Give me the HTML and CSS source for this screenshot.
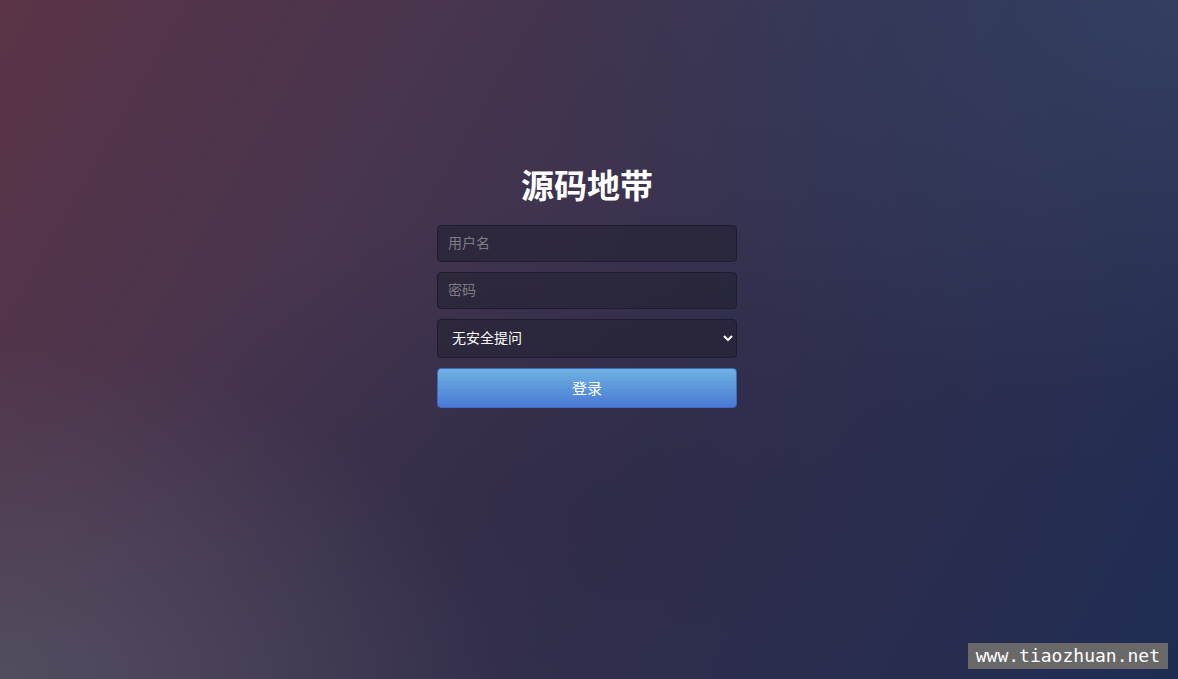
FILE: index.html
```html
<!DOCTYPE html>
<html lang="zh-CN">
<head>
    <meta charset="UTF-8">
    <meta name="viewport" content="width=device-width, initial-scale=1.0">
    <title>源码地带</title>
    <link rel="stylesheet" href="styles.css">
</head>
<body>

    <div class="login">
        <h1>源码地带</h1>
        <form class="login-form">
            <input type="text" class="campo" placeholder="用户名">
            <input type="password" class="campo" placeholder="密码">
            <select class="campo pregunta">
                <option>无安全提问</option>
                <option>母亲的名字</option>
                <option>爷爷的名字</option>
            </select>
            <button type="button" class="entrar">登录</button>
        </form>
    </div>

    <div class="marca">www.tiaozhuan.net</div>

</body>
</html>
```
FILE: styles.css
```css
html, body {
    height: 100%;
}
body {
    margin: 0;
    font-family: "Noto Sans CJK SC", "Liberation Sans", sans-serif;
    color: #fff;
    background:
        radial-gradient(ellipse 60% 70% at 0% 100%, rgba(84, 82, 100, 0.8), rgba(84, 82, 100, 0) 70%),
        radial-gradient(ellipse 55% 60% at 100% 0%, rgba(52, 64, 98, 0.9), rgba(52, 64, 98, 0) 100%),
        radial-gradient(ellipse 45% 45% at 50% 75%, rgba(40, 37, 66, 0.45), rgba(40, 37, 66, 0) 100%),
        linear-gradient(120deg, #5b3447 0%, #47354e 30%, #34314f 58%, #1f2c52 100%);
    background-color: #32314f;
    overflow: hidden;
}
.login {
    width: 300px;
    padding: 161px 4px 0 0;
    margin: 0 auto;
}
h1 {
    margin: 0 0 18px;
    text-align: center;
    font-size: 33px;
    font-weight: bold;
    line-height: 46px;
}
.login-form {
    display: flex;
    flex-direction: column;
    gap: 10px;
}
.campo {
    box-sizing: border-box;
    width: 100%;
    height: 37px;
    padding: 0 10px 3px;
    font-family: inherit;
    font-size: 14px;
    color: #fff;
    background-color: rgba(35, 33, 50, 0.6);
    border: 1px solid #1d1b2c;
    border-radius: 4px;
    outline: none;
}
.campo::placeholder {
    color: #7d7b86;
}
.pregunta {
    height: 39px;
    padding-left: 10px;
    color-scheme: dark;
}
.pregunta option {
    background-color: #2d2b3f;
}
.entrar {
    height: 40px;
    padding-bottom: 3px;
    font-family: inherit;
    font-size: 15px;
    color: #fff;
    background: linear-gradient(#6fb2e0, #4a7ad6);
    border: 1px solid #3f68c2;
    border-radius: 4px;
    cursor: pointer;
}
.entrar:hover {
    background: linear-gradient(#78baea, #5284e0);
}
.marca {
    position: absolute;
    right: 10px;
    bottom: 10px;
    padding: 0 8px;
    height: 26px;
    line-height: 26px;
    font-family: "DejaVu Sans Mono", monospace;
    font-size: 18px;
    color: #fff;
    background-color: #686868;
}
```
